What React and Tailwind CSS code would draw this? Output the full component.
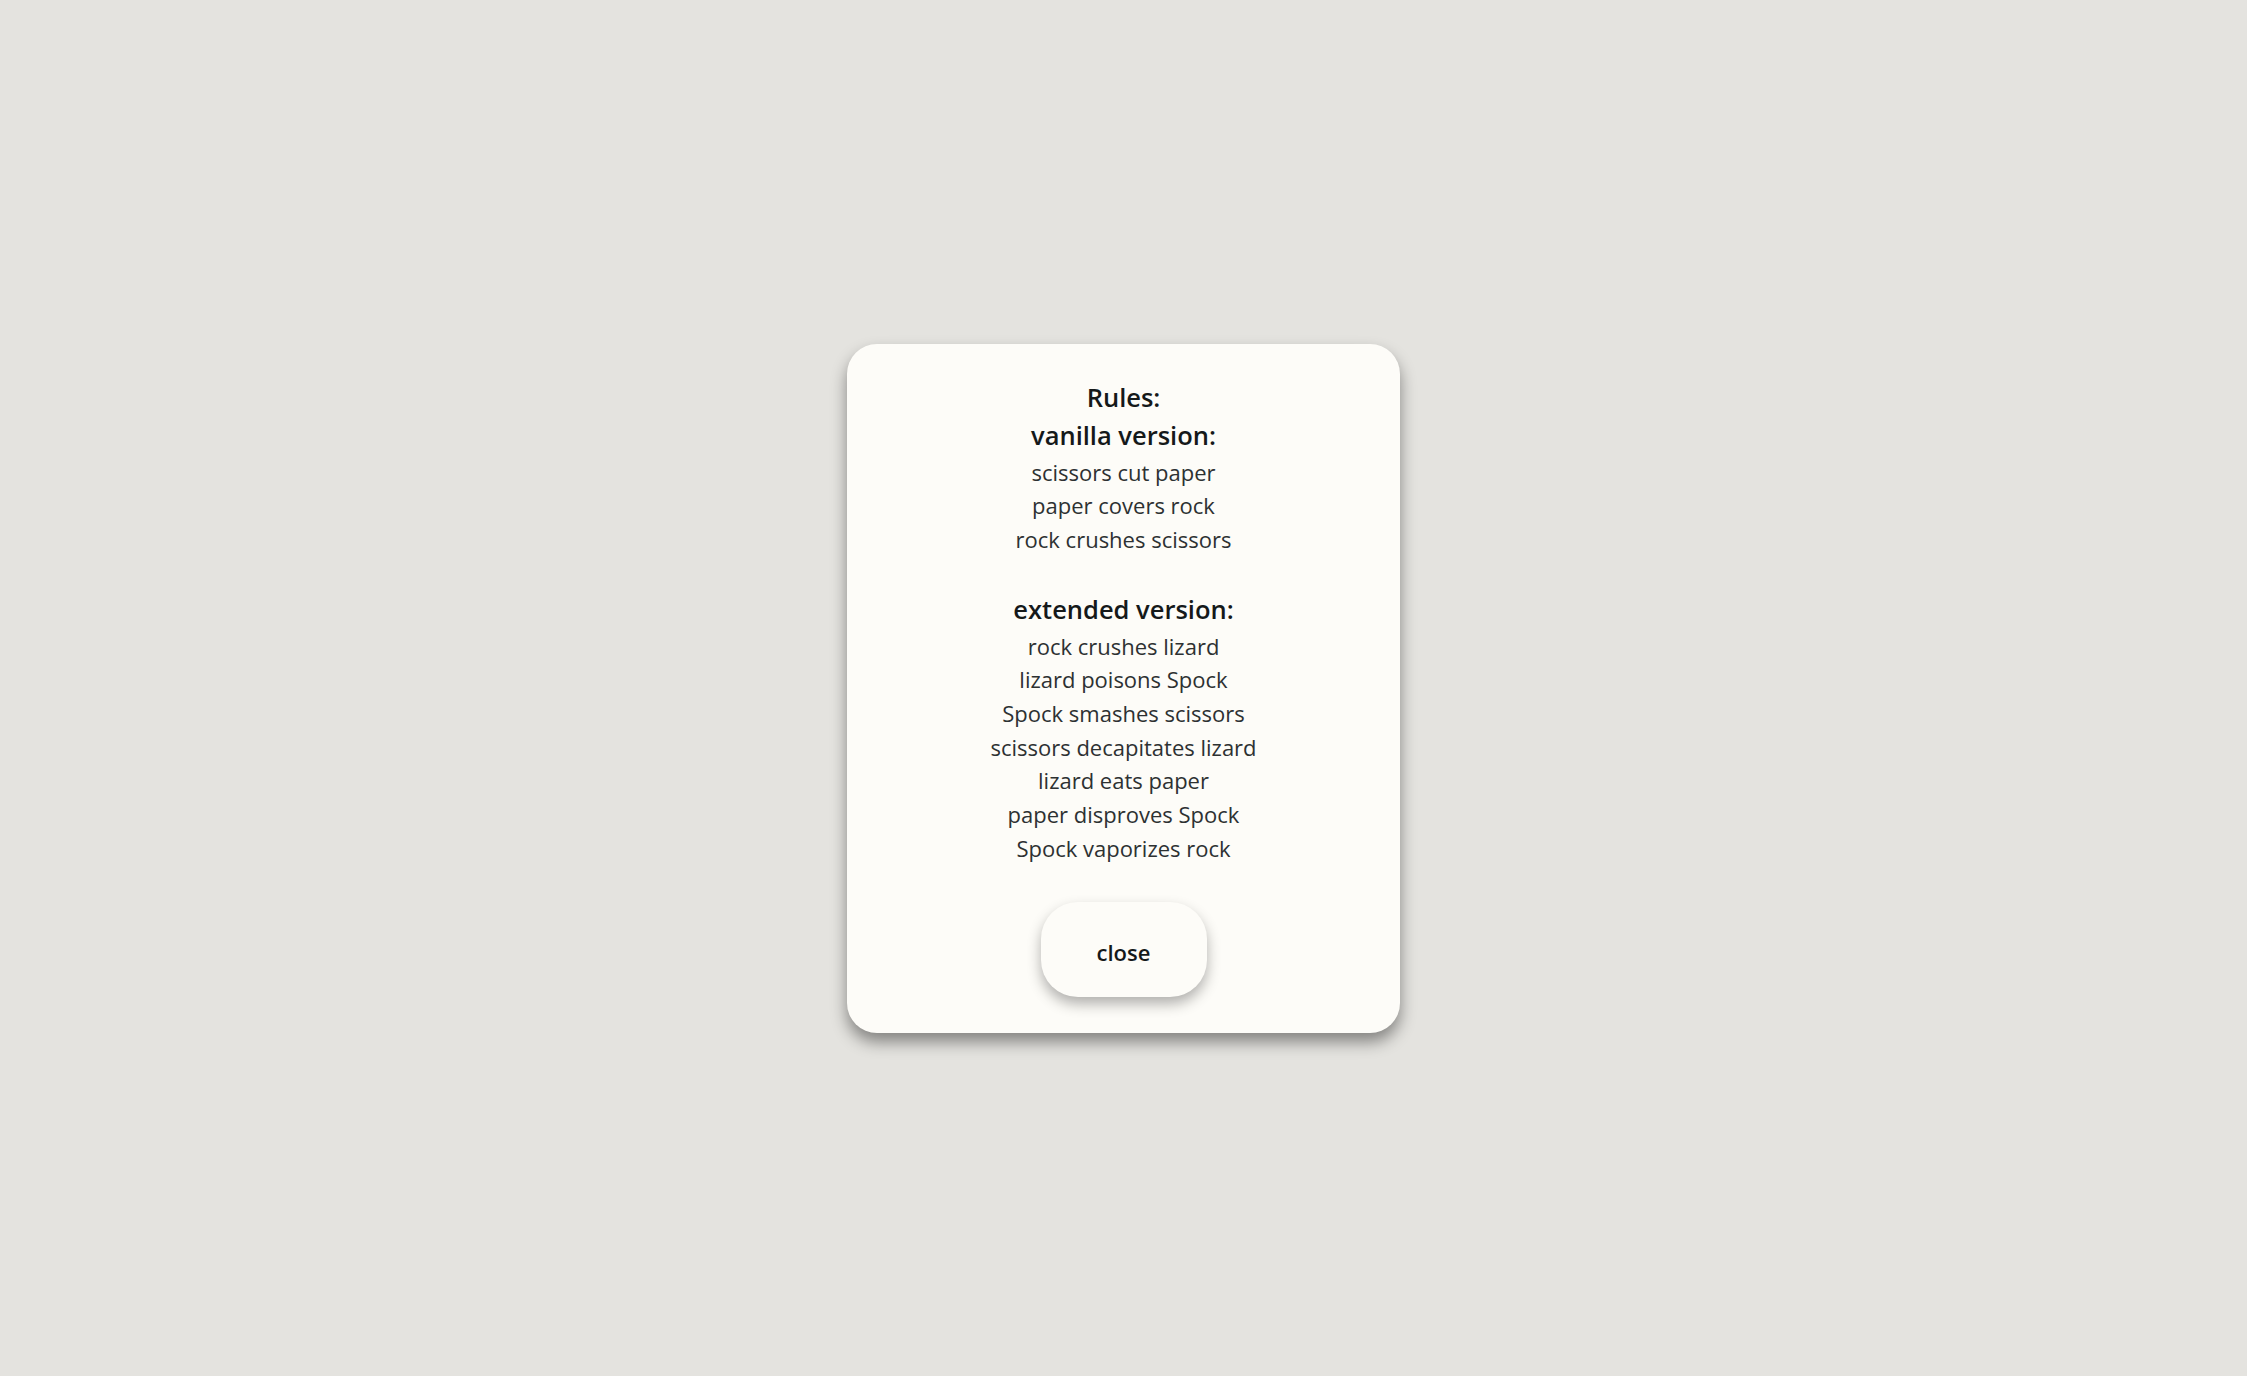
import React from 'react';

const vanilla = ['scissors cut paper', 'paper covers rock', 'rock crushes scissors'];
const extended = [
  'rock crushes lizard',
  'lizard poisons Spock',
  'Spock smashes scissors',
  'scissors decapitates lizard',
  'lizard eats paper',
  'paper disproves Spock',
  'Spock vaporizes rock',
];

export default function App() {
  return (
    <div className="min-h-screen w-full bg-[#e4e3df] flex items-center justify-center font-['Open_Sans',sans-serif]">
      {/* Rules modal */}
      <div className="w-[553px] h-[689px] bg-[#fdfcf8] rounded-[30px] shadow-[0_9px_16px_rgba(0,0,0,0.42)] flex flex-col items-center pt-[34px] text-center">
        <h2 className="text-[25.5px] leading-[38px] font-semibold text-[#15191a]">Rules:</h2>
        <h3 className="text-[25.5px] leading-[38px] font-semibold text-[#15191a]">vanilla version:</h3>
        <div className="mt-[2px]">
          {vanilla.map(r => (
            <p key={r} className="text-[22px] leading-[33.7px] text-[#2d3132]">{r}</p>
          ))}
        </div>
        <h3 className="mt-[33px] text-[25.5px] leading-[38px] font-semibold text-[#15191a]">extended version:</h3>
        <div className="mt-[2px]">
          {extended.map(r => (
            <p key={r} className="text-[22px] leading-[33.7px] text-[#2d3132]">{r}</p>
          ))}
        </div>
        <button className="mt-[36px] w-[166px] h-[95px] pt-[6px] rounded-[37px] bg-[#fdfcf8] shadow-[0_7px_14px_rgba(0,0,0,0.3)] text-[22px] font-semibold text-[#15191a]">
          close
        </button>
      </div>
    </div>
  );
}
